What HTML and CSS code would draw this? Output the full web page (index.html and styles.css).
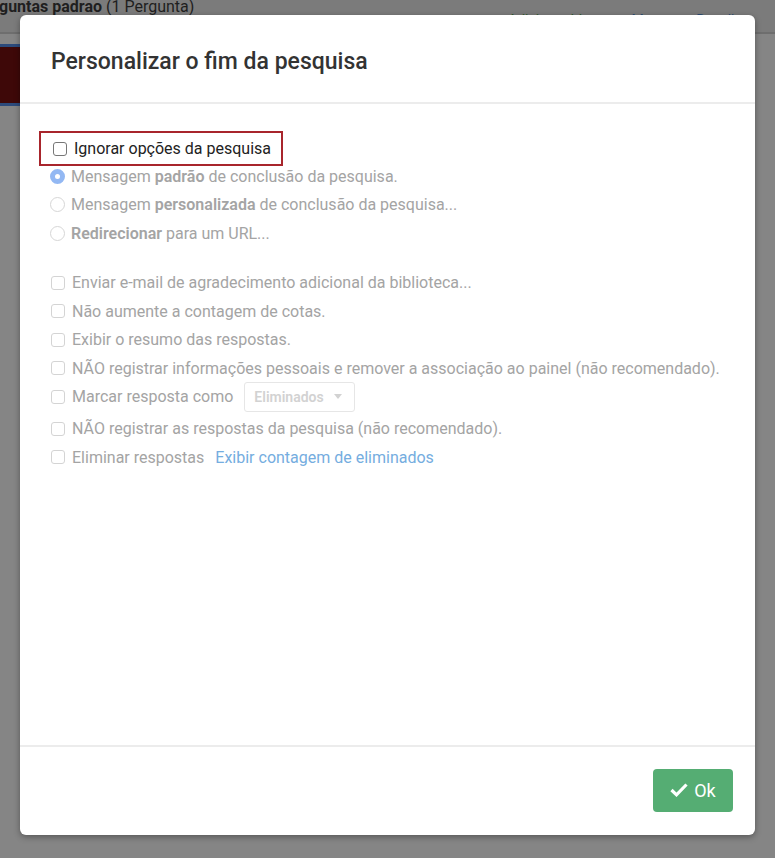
FILE: index.html
```html
<!DOCTYPE html>
<html lang="pt">
<head>
    <meta charset="UTF-8">
    <meta name="viewport" content="width=device-width, initial-scale=1.0">
    <title>Personalizar o fim da pesquisa</title>
    <link rel="stylesheet" href="styles.css">
</head>
<body>
    <div class="page">
        <div class="topbar">
            <span class="block-title"><b>guntas padrao</b> (1 Pergunta)</span>
            <span class="block-links">
                <span class="link-green">Adicionar bloco</span>
                <span class="link-blue">Mover</span>
                <span class="link-blue">Recolher</span>
            </span>
        </div>
        <div class="block-strip"></div>
    </div>

    <div class="modal">
        <div class="modal-header">
            <h2>Personalizar o fim da pesquisa</h2>
        </div>
        <div class="modal-body">
            <label class="option highlight">
                <span class="box"></span>
                <span class="label">Ignorar opções da pesquisa</span>
            </label>
            <div class="group">
                <div class="option muted">
                    <span class="radio checked"></span>
                    <span class="label">Mensagem <b>padrão</b> de conclusão da pesquisa.</span>
                </div>
                <div class="option muted">
                    <span class="radio"></span>
                    <span class="label">Mensagem <b>personalizada</b> de conclusão da pesquisa...</span>
                </div>
                <div class="option muted">
                    <span class="radio"></span>
                    <span class="label"><b>Redirecionar</b> para um URL...</span>
                </div>
            </div>
            <div class="group extras">
                <div class="option muted"><span class="box"></span><span class="label">Enviar e-mail de agradecimento adicional da biblioteca...</span></div>
                <div class="option muted"><span class="box"></span><span class="label">Não aumente a contagem de cotas.</span></div>
                <div class="option muted"><span class="box"></span><span class="label">Exibir o resumo das respostas.</span></div>
                <div class="option muted"><span class="box"></span><span class="label">NÃO registrar informações pessoais e remover a associação ao painel (não recomendado).</span></div>
                <div class="option muted with-select">
                    <span class="box"></span><span class="label">Marcar resposta como</span>
                    <span class="select">Eliminados <span class="caret"></span></span>
                </div>
                <div class="option muted"><span class="box"></span><span class="label">NÃO registrar as respostas da pesquisa (não recomendado).</span></div>
                <div class="option muted">
                    <span class="box"></span><span class="label">Eliminar respostas</span>
                    <a class="link" href="#">Exibir contagem de eliminados</a>
                </div>
            </div>
        </div>
        <div class="modal-footer">
            <button class="btn-ok">
                <svg width="18" height="14" viewBox="0 0 18 14"><path d="M1.5 7 L6.5 11.8 L16.5 1.5" fill="none" stroke="#fff" stroke-width="3.2"/></svg>
                Ok
            </button>
        </div>
    </div>
</body>
</html>
```

FILE: styles.css
```css
body {
    margin: 0;
    font-family: Roboto, "Liberation Sans", sans-serif;
    background-color: #858585;
    height: 858px;
    overflow: hidden;
}

.page {
    position: relative;
}

.topbar {
    height: 32px;
    background-color: #7b7b7b;
    border-bottom: 2px solid #6e6e6e;
    display: flex;
    justify-content: space-between;
    font-size: 16px;
    color: #1f1f1f;
}

.block-title {
    margin-left: -1px;
    margin-top: -3px;
}

.block-links {
    margin-top: 12px;
    margin-right: 24px;
    display: flex;
    gap: 26px;
    font-size: 14px;
}

.link-green {
    color: #2f5a2a;
}

.link-blue {
    color: #2b4d73;
}

.block-strip {
    margin-top: 10px;
    height: 56px;
    width: 40px;
    background-color: #3e0808;
    border-top: 3px solid #2c4a7b;
    border-bottom: 3px solid #2c4a7b;
}

.modal {
    position: absolute;
    left: 20px;
    top: 15px;
    width: 735px;
    height: 820px;
    background-color: #fff;
    border-radius: 6px;
    box-shadow: 0 2px 6px rgba(0, 0, 0, 0.35);
    display: flex;
    flex-direction: column;
}

.modal-header {
    height: 87px;
    border-bottom: 2px solid #ececec;
    display: flex;
    align-items: center;
    padding-left: 31px;
}

.modal-header h2 {
    margin: 5px 0 0 0;
    font-size: 23px;
    font-weight: 500;
    color: #333;
}

.modal-body {
    flex: 1;
    padding: 27px 19px 0 19px;
}

.option {
    display: flex;
    align-items: center;
    height: 28.5px;
    font-size: 16px;
    color: #222;
    padding-left: 12px;
    white-space: nowrap;
}

.option b {
    font-weight: 600;
}

.highlight {
    width: fit-content;
    height: 31px;
    padding-right: 10px;
    border: 2px solid #a8252c;
    margin-bottom: -4px;
}

.muted {
    color: #a4a4a4;
}

.box {
    width: 12px;
    height: 12px;
    border: 1px solid #bbb;
    border-radius: 3px;
    margin-right: 7px;
    flex-shrink: 0;
}

.highlight .box {
    border-color: #777;
}

.muted .box {
    border-color: #d4d4d4;
}

.radio {
    width: 15px;
    height: 15px;
    border: 1px solid #d6d6d6;
    border-radius: 50%;
    margin-right: 6px;
    margin-left: -1px;
    flex-shrink: 0;
    box-sizing: border-box;
}

.radio.checked {
    border: 5px solid #93b8f3;
    background-color: #fff;
}

.extras {
    margin-top: 21px;
}

.with-select {
    margin-bottom: 3.5px;
}

.select {
    margin-left: 11px;
    height: 30px;
    width: 111px;
    border: 1px solid #e6e6e6;
    border-radius: 3px;
    display: inline-flex;
    align-items: center;
    padding-left: 9px;
    box-sizing: border-box;
    font-size: 14px;
    font-weight: 600;
    color: #d2d2d2;
}

.caret {
    margin-left: 10px;
    border-left: 4px solid transparent;
    border-right: 4px solid transparent;
    border-top: 5px solid #d2d2d2;
}

.link {
    color: #75ade0;
    text-decoration: none;
    margin-left: 11px;
}

.modal-footer {
    height: 88px;
    border-top: 2px solid #ececec;
    display: flex;
    justify-content: flex-end;
    align-items: center;
    padding-right: 22px;
}

.btn-ok {
    width: 80px;
    height: 43px;
    background-color: #55ad73;
    color: #fff;
    border: none;
    border-radius: 4px;
    font-family: inherit;
    font-size: 18px;
    display: flex;
    align-items: center;
    justify-content: center;
    gap: 6px;
    margin-top: -2px;
}
```
